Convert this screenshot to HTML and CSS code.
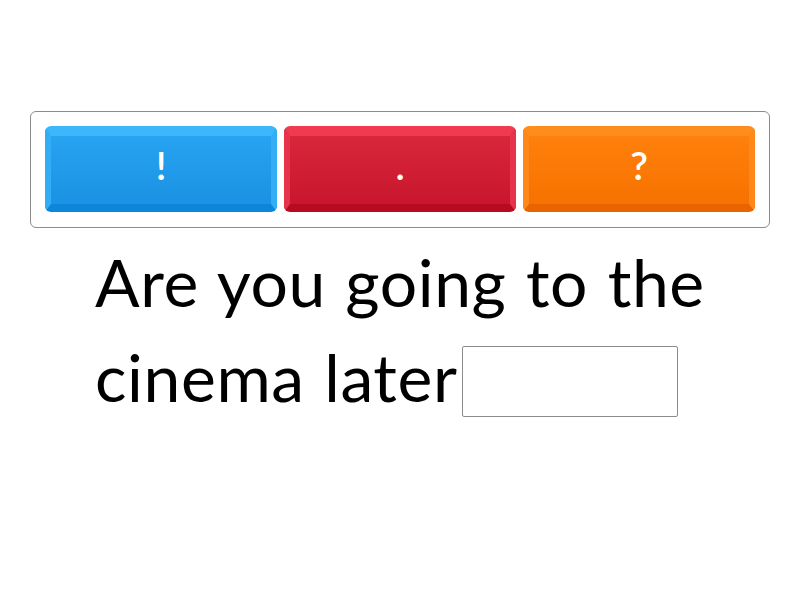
FILE: index.html
```html
<!DOCTYPE html>
<html>
<head>
<meta charset="utf-8">
<link rel="stylesheet" href="styles.css">
</head>
<body>
<div class="page">
  <div class="choices">
    <div class="btn blue"><span>!</span></div>
    <div class="btn red"><span>.</span></div>
    <div class="btn orange"><span>?</span></div>
  </div>
  <div class="sentence">Are you going to the cinema later <span class="blank"></span></div>
</div>
</body>
</html>
```
FILE: styles.css
```css
html, body {
  margin: 0;
  padding: 0;
  background: #fff;
}
.page {
  width: 800px;
  height: 600px;
  padding-top: 111px;
  box-sizing: border-box;
  font-family: "Lato", "Noto Sans", sans-serif;
}
.choices {
  margin-left: 30px;
  width: 740px;
  height: 117px;
  box-sizing: border-box;
  border: 1px solid #8c8c8c;
  border-radius: 6px;
  padding: 14px 14px 14px 14px;
  display: flex;
  gap: 7px;
}
.btn {
  flex: 1;
  height: 86px;
  border-radius: 6px;
  display: flex;
  align-items: center;
  justify-content: center;
  color: #fff;
  font-size: 39px;
  font-weight: 600;
  box-sizing: border-box;
  border-style: solid;
  border-width: 10px 6px 8px 6px;
}
.btn span { position: relative; top: -5px; }
.blue {
  background: linear-gradient(#26a3f1, #1b92e3);
  border-color: #3cb7fb #33adf5 #0b86d9 #33adf5;
}
.red {
  background: linear-gradient(#d8263b, #c8172c);
  border-color: #ef3a50 #e6324a #b70b21 #e6324a;
}
.orange {
  background: linear-gradient(#ff800c, #f77200);
  border-color: #ff8d1e #ff881a #e96300 #ff881a;
}
.sentence {
  margin-top: 6px;
  padding-left: 95px;
  width: 640px;
  font-size: 66px;
  line-height: 95px;
  letter-spacing: 0.6px;
  word-spacing: 2px;
  color: #000;
}
.blank {
  display: inline-block;
  width: 216px;
  height: 71px;
  margin-left: -14px;
  box-sizing: border-box;
  border: 1px solid #8c8c8c;
  border-radius: 2px;
  vertical-align: -15px;
}
```
